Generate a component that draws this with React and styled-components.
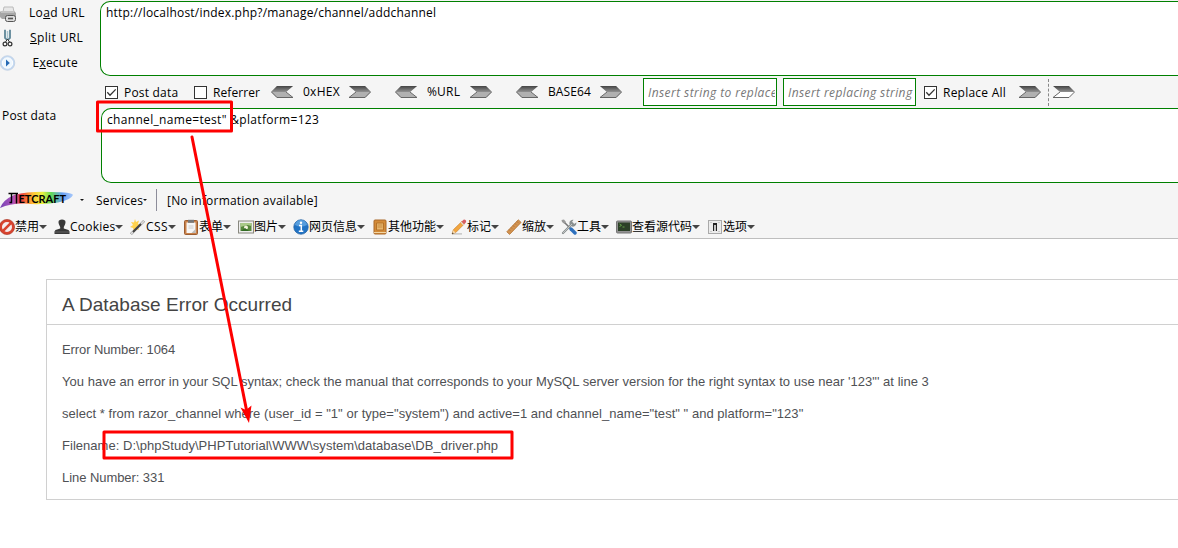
import React from "react";
import styled, { createGlobalStyle } from "styled-components";

const Global = createGlobalStyle`
  * { box-sizing: border-box; }
  body { margin: 0; background: #fff; overflow: hidden; }
`;
const Page = styled.div`
  position: relative; width: 1178px; height: 548px; overflow: hidden;
  font: 12px/16px "Open Sans", "Noto Sans CJK SC", sans-serif; color: #000; white-space: nowrap;
`;
const Chrome = styled.div`
  height: 239px; background: #f5f5f5; border-bottom: 1px solid #bebebe; display: flex; flex-direction: column;
`;
const HackBar = styled.div`display: flex; height: 184px;`;
const Side = styled.div`width: 100px; flex: none; display: flex; flex-direction: column;`;
const Action = styled.div`
  display: flex; align-items: center; height: 25px;
  svg { flex: none; width: 17px; height: 18px; margin-right: ${(p) => p.$gap}px; }
`;
const SideLabel = styled.div`margin: 33px 0 0 2px; letter-spacing: 0.2px;`;
const Main = styled.div`flex: 1; min-width: 0; display: flex; flex-direction: column;`;
const Area = styled.div`
  background: #fff; border: 1px solid #008000; border-right: 0; border-radius: 10px 0 0 10px;
  height: 75px; margin: ${(p) => p.$mt || 0}px 0 0 ${(p) => p.$ml}px; padding: 3px 5px; letter-spacing: ${(p) => p.$ls}px;
`;
const Options = styled.div`display: flex; align-items: center; height: 32px; padding-left: 5px;`;
const Check = styled.span`
  width: 13px; height: 13px; border: 1px solid #333; background: #fff; display: flex; flex: none; margin-right: 6px;
`;
const Text = styled.span`
  display: inline-block; flex: none; width: ${(p) => p.$w}px; letter-spacing: ${(p) => p.$ls || 0}px;
  margin-right: ${(p) => p.$mr || 0}px; padding-top: ${(p) => p.$pt || 0}px;
`;
const ArrowIcon = styled.svg`width: 22px; height: 12px; flex: none; margin-right: ${(p) => p.$mr || 0}px; display: block;`;
const Field = styled.div`
  width: ${(p) => p.$w}px; height: 28px; flex: none; border: 1px solid #008000; background: #fff; color: #777;
  font-style: italic; line-height: 28px; padding-left: 4px; margin-right: ${(p) => p.$mr}px; letter-spacing: ${(p) => p.$ls}px;
`;
const Clip = styled.div`overflow: hidden; margin-right: 1px;`;
const Dashed = styled.span`height: 27px; border-left: 1px dashed #888; margin: 0 4px 0 0;`;
const Netcraft = styled.div`display: flex; align-items: center; height: 32px;`;
const Divider = styled.span`width: 1px; height: 22px; background: #8d8d9a; margin: 0 10px 0 9px;`;
const Caret = styled.span`
  border: ${(p) => p.$s}px solid transparent; border-bottom: 0; border-top: ${(p) => p.$s}px solid ${(p) => p.$c || "#444"};
  margin: 0 ${(p) => p.$mr || 0}px 0 ${(p) => p.$ml || 0}px; flex: none;
`;
const DevBar = styled.div`display: flex; height: 22px; align-items: center; margin-left: -1px;`;
const DevItem = styled.div`
  display: flex; align-items: center; flex: none; margin-right: 7px;
  svg { width: 16px; height: 16px; flex: none; display: block; }
`;
const ErrorBox = styled.main`
  margin: 40px 0 0 46px; width: 1140px; height: 221px; border: 1px solid #d0d0d0;
  font: 13px/20px "Liberation Sans", Arial, sans-serif; color: #4f5155;
`;
const Heading = styled.h1`
  font-size: 19px; font-weight: 400; line-height: 24px; color: #444; margin: 0 0 15px; letter-spacing: 0.04px;
  padding: 13px 15px 7px; border-bottom: 1px solid #d0d0d0;
`;
const Line = styled.p`margin: 0 15px 12px; letter-spacing: ${(p) => p.$ls || 0}px;`;
const Overlay = styled.svg`position: absolute; left: 0; top: 0; width: 1178px; height: 548px; pointer-events: none;`;

function Tick() {
  return <svg width="11" height="11" viewBox="0 0 11 11"><path d="M1.3 5.3 4 8.2 9.7 2.4" fill="none" stroke="#333" strokeWidth="1.3" /></svg>;
}
function Arrow({ left, hollow, mr }) {
  return (
    <ArrowIcon $mr={mr} viewBox="0 0 22 12">
      <g transform={left ? "translate(22 0) scale(-1 1)" : undefined}>
        <path d="M0 0H16L22 6 16 12H0L7 6Z" fill={hollow ? "#fff" : "#b1b1b1"} />
        <path d="M0 0H16L22 6H7Z" fill="url(#steel)" />
        <path d="M0 11.5 7 6M0 11.5H16L21.5 6" fill="none" stroke="#666" strokeWidth="1" />
      </g>
    </ArrowIcon>
  );
}
const icons = {
  ban: <><circle cx="8" cy="8" r="6.3" fill="#f5eeee" stroke="#d8432e" strokeWidth="2.6" /><path d="m3.7 3.7 8.500 8.500" transform="matrix(-1 0 0 1 16 0)" stroke="#d8432e" strokeWidth="2.6" /><circle cx="8" cy="8" r="7.6" fill="none" stroke="#a62d1d" strokeWidth=".6" /></>,
  stamp: <><path d="M5 1.5Q8-.3 11 1.5 12 3 11 5.5L9.8 8v1.5L14.5 11 15.5 12.5V15H.5v-2.5L1.5 11 6.2 9.5V8L5 5.5Q4 3 5 1.5Z" fill="#393939" /><path d="M1 13h14" stroke="#666" /></>,
  wand: <><path d="M5 0 6 3 9 1.5 8 5l3 1-3 2 1 3-3-1-2 3-1-4-3-1 3-2-2-3 3 .5Z" fill="#ffd34d" /><path d="M1 15 14 2" stroke="#444" strokeWidth="2.4" /><path d="m11 5 3-3M1 15l2-2" stroke="#ddd" strokeWidth="1.8" /></>,
  form: <><rect x="1.5" y="1.5" width="13" height="14" rx="1" fill="#c9824a" stroke="#9b5c30" /><path d="M3.500 3.500h9v10.500h-9z" fill="#f6f6f6" /><path d="M5 .8h6v3H5z" fill="#777" /><path d="M5.5 7h5M5.5 9h5" stroke="#ccc" /><path d="m8.500 14 4-4v4z" fill="#bbb" /></>,
  image: <><rect x=".5" y="2" width="15" height="12" fill="#eee" stroke="#88887f" /><path d="M2.5 4h11v8h-11z" fill="#55863a" /><path d="M2.5 4h11v3l-4-1-7 2z" fill="#a9c987" /><circle cx="8" cy="8.5" r="2" fill="#f4f4dd" /><path d="m3 12 4-3 4 3z" fill="#326b24" /></>,
  info: <><circle cx="8" cy="8" r="7.2" fill="#2173c4" stroke="#2463a5" strokeWidth=".8" /><path d="M2 6a6 5 0 0 1 12 0Q8 9 2 6" fill="#569ddd" /><path d="M6 6.500h2.300V12M5.800 12.200H10.300" stroke="#fff" strokeWidth="1.500" fill="none" /><circle cx="8" cy="3.7" r="1.200" fill="#fff" /></>,
  book: <><rect x="2" y="1" width="12" height="14" rx="1" fill="#d38b38" stroke="#a9682a" /><path d="M4.500 4h7v7h-7z" fill="#e8b66e" stroke="#b57228" /><path d="M5.500 6h5M5.500 8h5" stroke="#c58b40" /><path d="M2 13.5h12" stroke="#f2d5a3" /></>,
  pencil: <><path d="M1 14.900h10" stroke="#bbb" strokeWidth="1.200" fill="none" /><path d="m1 15 1.300-4.200L11 2.300l2.500 2.500-8.700 8.700Z" fill="#f2a640" stroke="#c27a28" strokeWidth=".6" /><path d="m10.500 2.800 2-2q1-.7 2 .2t.5 2.200l-2 2Z" fill="#d65b60" /><path d="m10 3.200 2.600 2.600" stroke="#ddd" strokeWidth="1.200" /><path d="m1 15 1.200-3.700 2.500 2.400Z" fill="#f2d7ad" /><path d="m1 15 .5-1.500 1.200 1Z" fill="#222" /></>,
  ruler: <><path d="m.8 12.800 11.500-12 2.800 2.600-11.500 12Z" fill="#d39350" stroke="#b37434" strokeWidth=".8" /><path d="m3 10.500 1.200 1.200M5 8.500l1 1M7 6.500l1.200 1.200M9 4.500l1 1M11 2.500l1.200 1.200" stroke="#8d5424" strokeWidth=".6" /></>,
  tools: <><path d="m2.500 2.500 8 8" stroke="#777" strokeWidth="1.600" /><path d="m10 10 4 4" stroke="#2e70bd" strokeWidth="3.400" strokeLinecap="round" /><path d="m2 14 9.500-9.500" stroke="#858b8b" strokeWidth="2.200" strokeLinecap="round" /><path d="M15.300 3.500 13 5l-2-2 1.500-2.300A3.500 3.500 0 1 0 15.300 3.500" fill="#8a9090" /><path d="M.5 1 3 .5 5 3 3.500 5 1 3Z" fill="#999" /><path d="m2 14 9-9" stroke="#ddd" strokeWidth=".7" /></>,
  terminal: <><rect x=".5" y="2" width="15" height="12" rx="1" fill="#929292" stroke="#777" /><path d="M2 3.500h12v8.500H2z" fill="#2c4027" /><path d="m3.500 5 2 1.300-2 1.300M6.500 8h2" fill="none" stroke="#72b950" strokeWidth=".8" /></>,
  options: <><rect x="1.500" y="1.500" width="13" height="13" fill="#ececec" stroke="#aaa" /><path d="M6 4h4v8H6z" fill="#222" /><path d="M7.200 6h1.600v6H7.200z" fill="#eee" /><path d="M4 12v1M12 12v1M4 3v1M12 3v1" stroke="#aaa" /></>,
};
const menus = [
  ["ban", "禁用", 24], ["stamp", "Cookies", 45, 0.25], ["wand", "CSS", 22, 0.4], ["form", "表单", 24], ["image", "图片", 24],
  ["info", "网页信息", 48], ["book", "其他功能", 48], ["pencil", "标记", 24], ["ruler", "缩放", 24], ["tools", "工具", 24],
  ["terminal", "查看源代码", 60], ["options", "选项", 24],
];

function Logo() {
  return (
    <svg width="74" height="20" viewBox="0 0 74 20">
      <defs>
        <linearGradient id="rainbow">
          <stop offset="0" stopColor="#7546b5" /><stop offset=".18" stopColor="#b052bd" /><stop offset=".3" stopColor="#ee4038" />
          <stop offset=".46" stopColor="#ffc936" /><stop offset=".58" stopColor="#eaf143" /><stop offset=".7" stopColor="#62d957" />
          <stop offset=".85" stopColor="#659df2" /><stop offset="1" stopColor="#a9c9fa" />
        </linearGradient>
        <filter id="soft"><feGaussianBlur stdDeviation=".6" /></filter>
      </defs>
      <path d="M0 18Q3 10 14 5 30 1 51 2 72 2 73 5 71 10 58 12.500 38 15.500 25 13.500 11 13 0 18Z" fill="url(#rainbow)" filter="url(#soft)" />
      <path d="M8.500 3.500H18M11.500 3.500V12.500H9.500M16.500 3.500V13.500" fill="none" stroke="#000" strokeWidth="1.400" />
      <text x="18.500" y="13" fontFamily="Lato, sans-serif" fontSize="11" fontWeight="700" textLength="47.500" lengthAdjust="spacing">ETCRAFT</text>
    </svg>
  );
}

export default function App() {
  return (
    <Page>
      <Global />
      <Chrome>
        <HackBar>
          <Side>
            <Action $gap={12}>
              <svg viewBox="0 0 17 18"><path d="M4 3h9l1 5H3Z" fill="#e8e8e8" stroke="#bbb" /><path d="M1 7h13l2 2v6H2L0 13V8Z" fill="#a7a7a7" /><path d="M1 8h13" stroke="#ddd" /><rect x="5.500" y="11.500" width="10" height="6" rx="2" fill="#ddd" stroke="#555" /><path d="M8 14.500h5" stroke="#555" strokeWidth="1.600" /></svg>
              <Text $ls={0.35}>Lo<u>a</u>d URL</Text>
            </Action>
            <Action $gap={13}>
              <svg viewBox="0 0 17 18"><path d="M5 .8v8l2 2M10 .8v8l-2 2" stroke="#5f8798" strokeWidth="1.800" fill="none" /><path d="M7.500 2v9" stroke="#a9c6d0" strokeWidth="1.500" /><circle cx="5" cy="15" r="1.900" fill="none" stroke="#333" strokeWidth="1.200" /><circle cx="10" cy="15" r="1.900" fill="none" stroke="#333" strokeWidth="1.200" /><path d="m5.500 13 2-3 2 3" fill="none" stroke="#333" /></svg>
              <Text $ls={0.38}><u>S</u>plit URL</Text>
            </Action>
            <Action $gap={15.5}>
              <svg viewBox="0 0 17 18"><circle cx="7.500" cy="9" r="7.300" fill="#c3d9f2" stroke="#c0cfe2" strokeWidth=".8" /><circle cx="7.500" cy="9" r="5.200" fill="#eef7fe" stroke="#fff" /><path d="m6 5.500 3.800 3.500L6 12.500Z" fill="#276ab5" /></svg>
              <Text $ls={0.22}>E<u>x</u>ecute</Text>
            </Action>
            <SideLabel>Post data</SideLabel>
          </Side>
          <Main>
            <Area $ml={0} $mt={1} $ls={0.21}>http://localhost/index.php?/manage/channel/addchannel</Area>
            <Options>
              <Check><Tick /></Check><Text $w={54} $ls={0.2} $mr={16} $pt={2}>Post data</Text>
              <Check /><Text $w={46} $ls={0.08} $mr={12} $pt={2}>Referrer</Text>
              <Arrow left mr={10} /><Text $w={37} $ls={0.25} $mr={9}>0xHEX</Text><Arrow mr={24} />
              <Arrow left mr={10} /><Text $w={34} $ls={0.2} $mr={9}>%URL</Text><Arrow mr={24} />
              <Arrow left mr={10} /><Text $w={43} $ls={0.1} $mr={9}>BASE64</Text><Arrow mr={21} />
              <Field $w={134} $mr={6} $ls={0.42}><Clip>Insert string to replace</Clip></Field>
              <Field $w={133} $mr={8} $ls={0.4}><Clip>Insert replacing string</Clip></Field>
              <Check><Tick /></Check><Text $w={64} $ls={0.23} $mr={12} $pt={2}>Replace All</Text>
              <Arrow mr={7} /><Dashed /><Arrow hollow />
            </Options>
            <Area $ml={1} $ls={0.32}>channel_name=test" &amp;platform=123</Area>
          </Main>
        </HackBar>
        <Netcraft>
          <Logo /><Caret $s={2.5} $c="#111" $ml={6} $mr={12} />
          <Text $w={47} $ls={0.2} $pt={2}>Services</Text><Caret $s={2.5} $c="#111" />
          <Divider /><Text $ls={0.2} $pt={2}>[No information available]</Text>
        </Netcraft>
        <DevBar>
          {menus.map(([icon, label, w, ls]) => (
            <DevItem key={icon}><svg viewBox="0 0 16 16">{icons[icon]}</svg><Text $w={w} $ls={ls}>{label}</Text><Caret $s={4} /></DevItem>
          ))}
        </DevBar>
      </Chrome>
      <ErrorBox>
        <Heading>A Database Error Occurred</Heading>
        <Line $ls={-0.1}>Error Number: 1064</Line>
        <Line $ls={0.021}>You have an error in your SQL syntax; check the manual that corresponds to your MySQL server version for the right syntax to use near '123"' at line 3</Line>
        <Line $ls={0.034}>select * from razor_channel where (user_id = "1" or type="system") and active=1 and channel_name="test" " and platform="123"</Line>
        <Line $ls={0.035}>Filename: D:\phpStudy\PHPTutorial\WWW\system\database\DB_driver.php</Line>
        <Line $ls={-0.06}>Line Number: 331</Line>
      </ErrorBox>
      <Overlay viewBox="0 0 1178 548">
        <defs>
          <linearGradient id="steel" x2="0" y2="1"><stop stopColor="#444" /><stop offset="1" stopColor="#929292" /></linearGradient>
        </defs>
        <g fill="none" stroke="#fe0000" strokeWidth="3" strokeLinejoin="round" strokeLinecap="round">
          <rect x="97.500" y="102" width="134" height="29" />
          <rect x="104" y="432" width="408" height="26" />
          <path d="M192 137 246.500 410" />
        </g>
        <path d="m249 423-8.500-15.500 5.500 2.500 5.500-4.500Z" fill="#fe0000" />
      </Overlay>
    </Page>
  );
}
